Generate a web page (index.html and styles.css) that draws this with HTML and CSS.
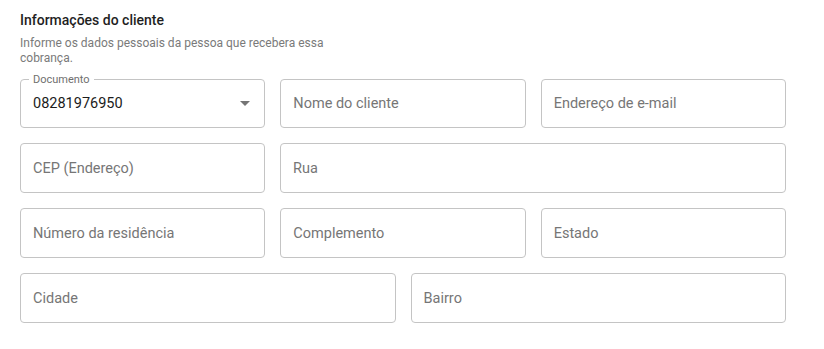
FILE: index.html
```html
<!DOCTYPE html>
<html lang="pt-br">
<head>
<meta charset="UTF-8">
<meta name="viewport" content="width=device-width, initial-scale=1.0">
<title>Informações do cliente</title>
<link rel="stylesheet" href="styles.css">
</head>
<body>

<div class="section">
    <h2 class="section-title">Informações do cliente</h2>
    <p class="section-text">Informe os dados pessoais da pessoa que recebera essa cobrança.</p>

    <div class="form">
        <div class="row row-3 row-top">
            <fieldset class="field field-select">
                <legend>Documento</legend>
                <span class="value">08281976950</span>
                <span class="arrow"></span>
            </fieldset>
            <div class="field"><span class="placeholder">Nome do cliente</span></div>
            <div class="field"><span class="placeholder">Endereço de e-mail</span></div>
        </div>
        <div class="row row-cep">
            <div class="field"><span class="placeholder">CEP (Endereço)</span></div>
            <div class="field"><span class="placeholder">Rua</span></div>
        </div>
        <div class="row row-3">
            <div class="field"><span class="placeholder">Número da residência</span></div>
            <div class="field"><span class="placeholder">Complemento</span></div>
            <div class="field"><span class="placeholder">Estado</span></div>
        </div>
        <div class="row row-2">
            <div class="field"><span class="placeholder">Cidade</span></div>
            <div class="field"><span class="placeholder">Bairro</span></div>
        </div>
    </div>
</div>

</body>
</html>
```

FILE: styles.css
```css
body {
    font-family: Roboto, "Noto Sans", Arial, sans-serif;
    background-color: #fff;
    color: #222;
    margin: 0;
    padding: 0;
}

.section {
    width: 766px;
    padding: 11px 20px 20px;
}

.section-title {
    margin: 0;
    font-size: 14px;
    font-weight: 500;
    line-height: 18px;
    color: #1f1f1f;
}

.section-text {
    margin: 7px 0 0;
    width: 330px;
    font-size: 12px;
    line-height: 15px;
    color: #7a7a7a;
}

.form {
    margin-top: 13px;
    display: flex;
    flex-direction: column;
    gap: 15px;
}

.row {
    display: grid;
    gap: 15px;
}

.row-3 {
    grid-template-columns: 1fr 1fr 1fr;
}

.row-cep {
    grid-template-columns: 245px 1fr;
}

.row-2 {
    grid-template-columns: 1fr 1fr;
}

.field {
    box-sizing: border-box;
    height: 50px;
    border: 1px solid #c4c4c4;
    border-radius: 4px;
    padding: 0 12px;
    display: flex;
    align-items: center;
    font-size: 14.5px;
}

.row-top .field {
    height: 49px;
}

.placeholder {
    color: #767676;
}

.row-top .field-select {
    margin: 0;
    min-width: 0;
    padding: 0 12px;
    height: 54px;
    margin-top: -5px;
}

.field-select legend {
    font-size: 11px;
    line-height: 11px;
    color: #6f6f6f;
    padding: 0 4px;
    margin-left: -4px;
}

.value {
    color: #1c1c1c;
    flex: 1;
    margin-top: -6px;
}

.arrow {
    width: 0;
    height: 0;
    border-left: 5px solid transparent;
    border-right: 5px solid transparent;
    border-top: 5px solid #757575;
    margin-right: 2px;
    margin-top: -6px;
}
```
